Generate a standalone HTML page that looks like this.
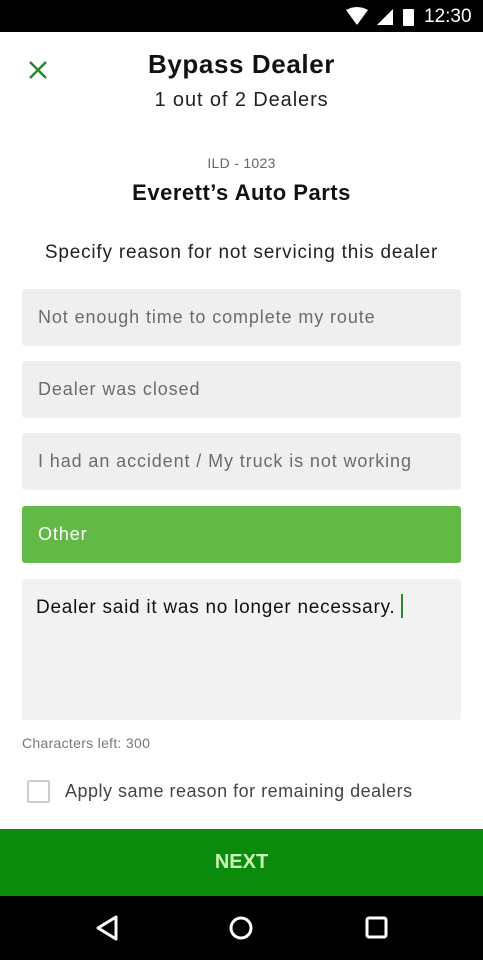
<!DOCTYPE html>
<html><head><style>
body{margin:0;width:483px;height:960px;position:relative;font-family:"Liberation Sans",sans-serif;background:#fff;overflow:hidden}
.a{position:absolute}
.c{left:0;width:483px;text-align:center}
.opt{position:absolute;left:22px;width:439px;height:57px;background:#efefef;border-radius:3px;color:#6b6b6b;font-size:18px;line-height:57px;box-sizing:border-box;padding-left:16px;letter-spacing:0.9px}
</style></head><body>
<div class="a" style="left:0;top:0;width:483px;height:32px;background:#000"></div>
<svg class="a" style="left:340px;top:6px" width="80" height="22">
<path d="M6 4 Q17 -2 28 4 L17 19 Z" fill="#fff"/>
<path d="M37 19 L53 3 L53 19 Z" fill="#fff"/>
<rect x="63" y="3" width="11" height="17" rx="1" fill="#fff"/>
</svg>
<div class="a" style="left:424px;top:6px;color:#fff;font-size:19px">12:30</div>
<svg class="a" style="left:28px;top:60px" width="20" height="20"><path d="M2 2L18 18M18 2L2 18" stroke="#2a8a2a" stroke-width="2.5"/></svg>
<div class="a c" style="top:49px;font-size:26px;font-weight:bold;color:#111;letter-spacing:0.6px">Bypass Dealer</div>
<div class="a c" style="top:89px;font-size:20px;color:#222;letter-spacing:0.9px">1 out of 2 Dealers</div>
<div class="a c" style="top:155px;font-size:14px;color:#666;letter-spacing:0.3px">ILD - 1023</div>
<div class="a c" style="top:180px;font-size:22px;font-weight:bold;color:#111;letter-spacing:0.5px">Everett’s Auto Parts</div>
<div class="a c" style="top:242px;font-size:19px;color:#222;letter-spacing:0.8px">Specify reason for not servicing this dealer</div>
<div class="opt" style="top:289px">Not enough time to complete my route</div>
<div class="opt" style="top:361px">Dealer was closed</div>
<div class="opt" style="top:433px">I had an accident / My truck is not working</div>
<div class="opt" style="top:506px;background:#62b946;color:#fff">Other</div>
<div class="a" style="left:22px;top:579px;width:439px;height:141px;background:#f2f2f2;border-radius:3px"></div>
<div class="a" style="left:36px;top:594px;font-size:19px;color:#111;letter-spacing:0.75px">Dealer said it was no longer necessary. <span style="display:inline-block;width:2px;height:24px;background:#2a8a2a;vertical-align:-5px"></span></div>
<div class="a" style="left:22px;top:735px;font-size:14px;color:#777;letter-spacing:0.3px">Characters left: 300</div>
<div class="a" style="left:27px;top:780px;width:19px;height:19px;border:2px solid #ccc;border-radius:2px"></div>
<div class="a" style="left:65px;top:781px;font-size:18px;color:#444;letter-spacing:0.5px">Apply same reason for remaining dealers</div>
<div class="a" style="left:0;top:829px;width:483px;height:67px;background:#0c8a0c;color:#c8f5b8;font-size:20px;font-weight:bold;text-align:center;line-height:66px">NEXT</div>
<div class="a" style="left:0;top:896px;width:483px;height:64px;background:#000"></div>
<svg class="a" style="left:0;top:896px" width="483" height="64">
<path d="M116 21 L98 32 L116 43 Z" fill="none" stroke="#fff" stroke-width="3" stroke-linejoin="round"/>
<circle cx="241" cy="32" r="10" fill="none" stroke="#fff" stroke-width="3"/>
<rect x="367" y="22" width="19" height="19" rx="2" fill="none" stroke="#fff" stroke-width="3"/>
</svg>
</body></html>
